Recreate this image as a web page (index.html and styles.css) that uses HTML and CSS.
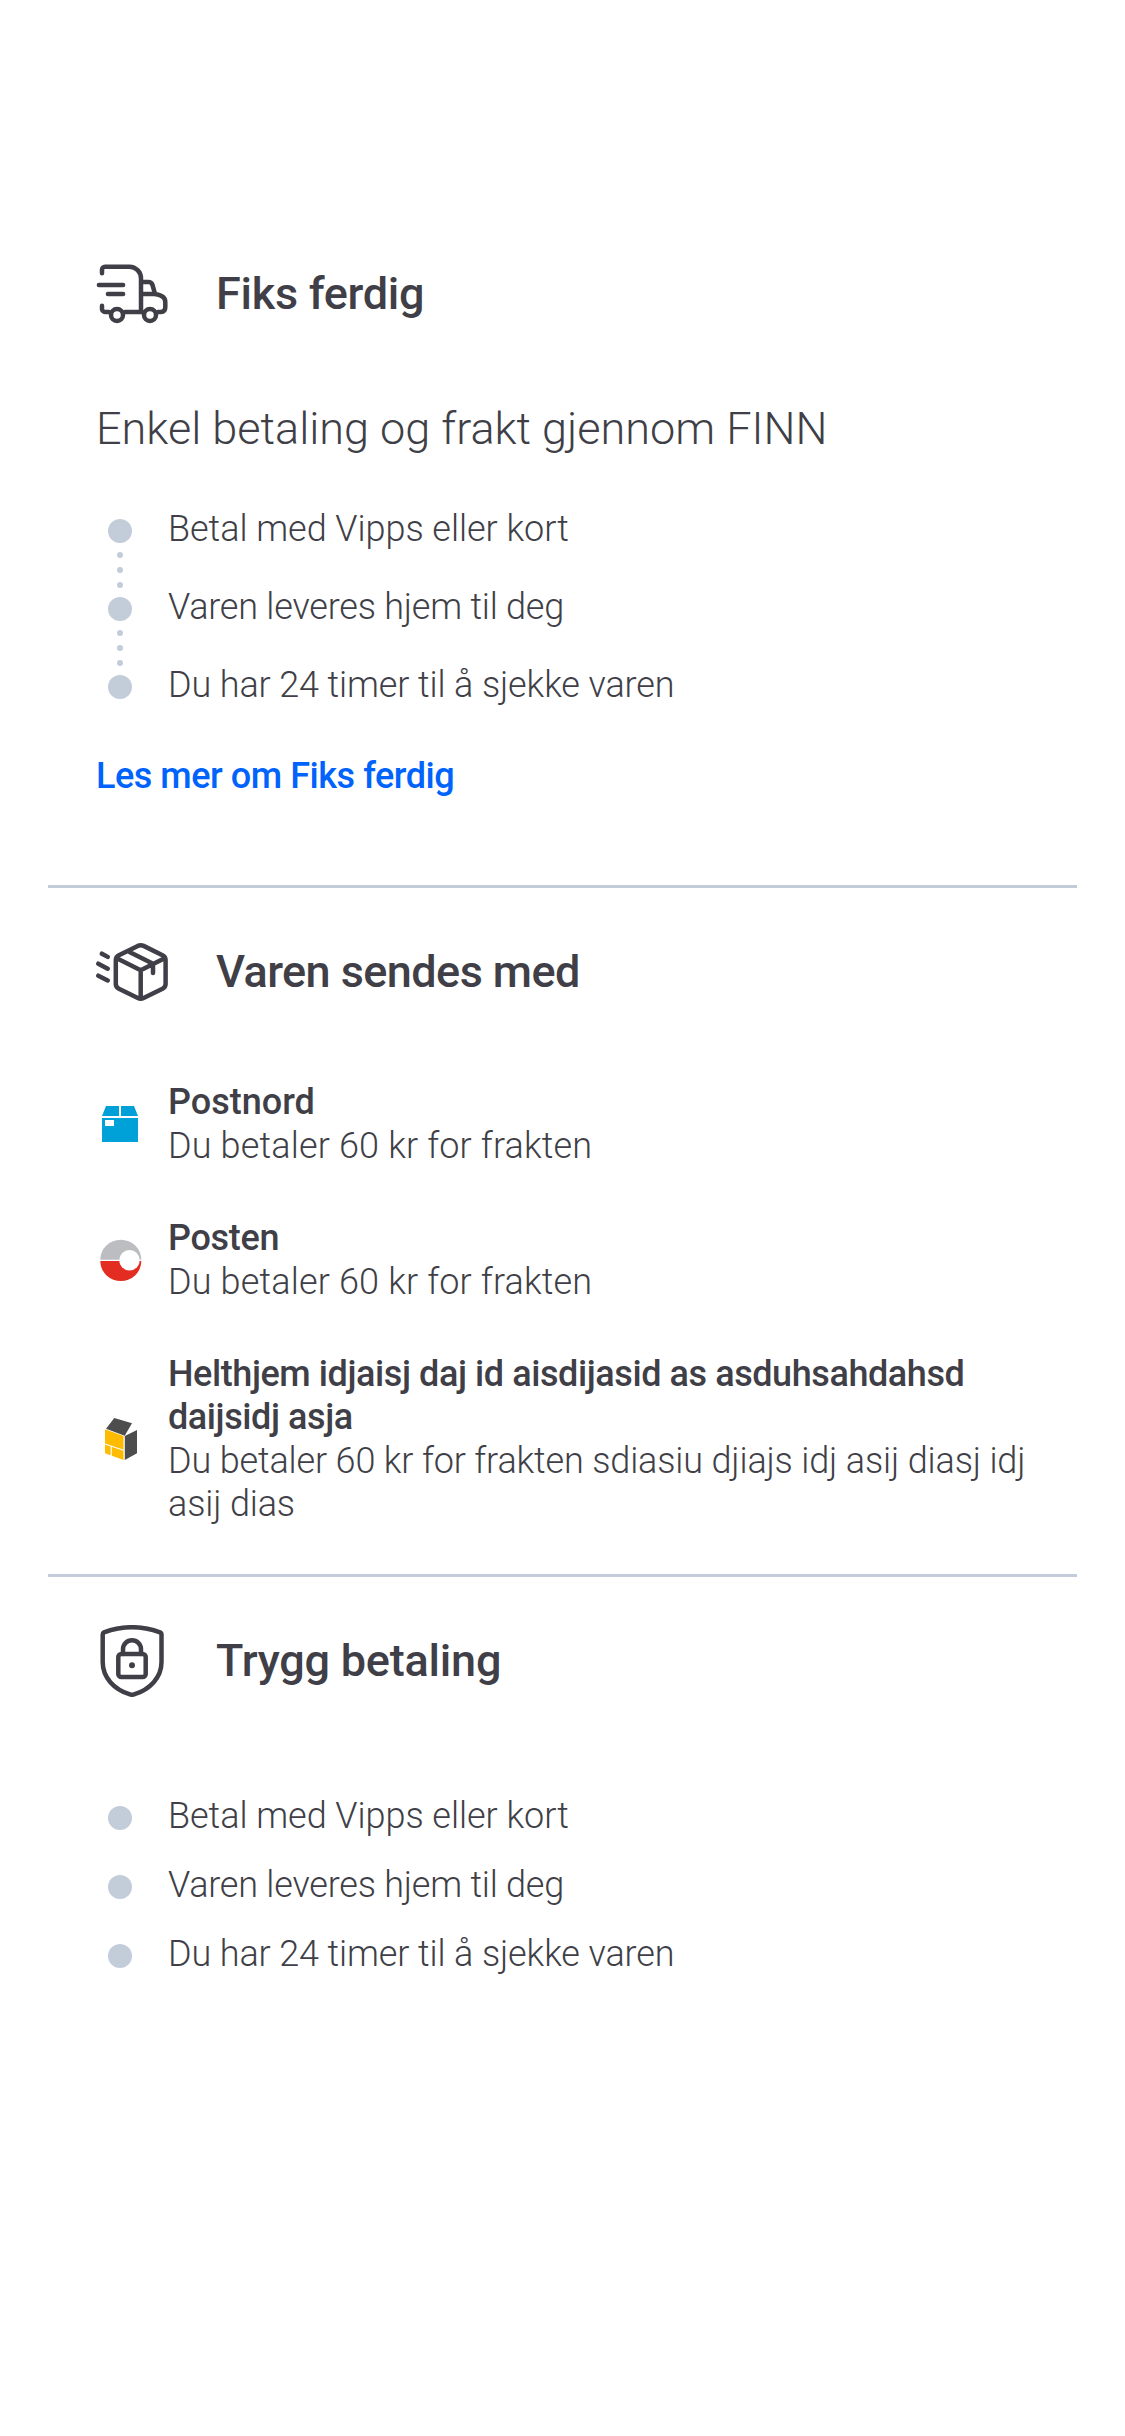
FILE: index.html
```html
<!DOCTYPE html>
<html lang="nb">
<head>
<meta charset="utf-8">
<title>Fiks ferdig</title>
<link rel="stylesheet" href="styles.css">
</head>
<body>
<main class="page">
  <section class="section section-shipping">
    <header class="section-header">
      <svg class="section-icon" viewBox="0 0 72 72">
        <path d="M6 15.3V11.7a3 3 0 0 1 3-3H33.5A11.7 11.7 0 0 1 45 20.4V53.7M6 47.7V50.9a3 3 0 0 0 3 3H13M29 53.9H46.5M2.9 27H27.1M11.9 36H27.1M45 24H52.3c2.2 0 3.6 1 4.2 3L59 35.8M45 36H58.5C65.5 36.8 69.3 39.5 69.3 44V49.3c0 2.9-1.5 4.6-4.3 4.6H62"/>
        <circle cx="21" cy="57" r="6"/>
        <circle cx="54" cy="57" r="6"/>
      </svg>
      <h2 class="section-title title-fiks">Fiks ferdig</h2>
    </header>
    <p class="intro">Enkel betaling og frakt gjennom FINN</p>
    <ol class="steps steps-linked">
      <li class="step"><span class="marker"><i class="dot"></i><i class="tick"></i><i class="tick"></i><i class="tick"></i></span><span class="label label-pay">Betal med Vipps eller kort</span></li>
      <li class="step"><span class="marker"><i class="dot"></i><i class="tick"></i><i class="tick"></i><i class="tick"></i></span><span class="label label-deliver">Varen leveres hjem til deg</span></li>
      <li class="step"><span class="marker"><i class="dot"></i></span><span class="label label-check">Du har 24 timer til å sjekke varen</span></li>
    </ol>
    <a class="more-link">Les mer om Fiks ferdig</a>
  </section>

  <section class="section section-carriers">
    <header class="section-header">
      <svg class="section-icon" viewBox="0 0 72 72">
        <path d="M41.8 9.9Q44.7 8.5 47.6 9.9L66.5 19.2Q69.6 20.8 69.6 24V48Q69.6 51.2 66.5 52.8L47.6 62Q44.7 63.5 41.8 62L22.9 52.8Q19.8 51.2 19.8 48V24Q19.8 20.8 22.9 19.2ZM20.8 22.3L44.7 34.3L68.6 22.3M44.7 34.3V62.7M33 15.8L57 27.7V37M5.9 17.7L11.7 20.9M2.3 27.7L11.7 32.7M2.3 39.7L11.7 44.5"/>
      </svg>
      <h2 class="section-title title-varen">Varen sendes med</h2>
    </header>
    <ul class="carriers">
      <li class="carrier">
        <svg class="carrier-logo" viewBox="0 0 48 47">
          <path fill="#00a0d8" d="M10 6H23V16H6ZM25 6H38L42 16H25ZM6 18H42V42H6Z"/>
          <path fill="#fff" d="M9 20H18V26H9Z"/>
        </svg>
        <div class="carrier-text">
          <h3 class="carrier-name">Postnord</h3>
          <p class="carrier-price">Du betaler 60 kr for frakten</p>
        </div>
      </li>
      <li class="carrier">
        <svg class="carrier-logo" viewBox="0 0 48 47">
          <path fill="#bbbdc0" d="M4.300 23.700A20.500 20 0 0 1 45.300 23.700Z"/>
          <path fill="#e32d22" d="M4.300 25A20.500 20 0 0 0 45.300 25Z"/>
          <circle fill="#fff" cx="33.500" cy="24.300" r="10.300"/>
        </svg>
        <div class="carrier-text">
          <h3 class="carrier-name name-posten">Posten</h3>
          <p class="carrier-price">Du betaler 60 kr for frakten</p>
        </div>
      </li>
      <li class="carrier">
        <svg class="carrier-logo" viewBox="0 0 48 47">
          <path fill="#4d4d4d" d="M18.300 3L36 8.300L28.700 20.700L10 13.700ZM28.800 21L41 15V38.300L28.800 45Z"/>
          <path fill="#ffbb00" d="M9 14.300L27.500 21V45L9 38.300Z"/>
          <path fill="none" stroke="#fff" stroke-width="1.200" d="M9 29L27.500 35.300M15.200 31V41"/>
        </svg>
        <div class="carrier-text">
          <h3 class="carrier-name name-helthjem">Helthjem idjaisj daj id aisdijasid as asduhsahdahsd<br>daijsidj asja</h3>
          <p class="carrier-price price-long">Du betaler 60 kr for frakten sdiasiu djiajs idj asij diasj idj<br>asij dias</p>
        </div>
      </li>
    </ul>
  </section>

  <section class="section section-payment">
    <header class="section-header">
      <svg class="section-icon" viewBox="0 0 72 72">
        <path d="M36 2.200C46 2.200 55 4 64 7.300Q65.500 8 65.500 9.800V37C65.500 52.500 54 64.500 38 69.400Q36 70.200 34 69.400C18 64.500 6.700 52.500 6.700 37V9.800Q6.700 8 8 7.300C17 4 26 2.200 36 2.200ZM27 29V24.300a9 9 0 0 1 18 0V29"/>
        <rect x="22.300" y="29" width="27.400" height="23" rx="3"/>
        <circle class="keyhole" cx="36" cy="40.300" r="3"/>
      </svg>
      <h2 class="section-title title-trygg">Trygg betaling</h2>
    </header>
    <ul class="steps steps-plain">
      <li class="step"><span class="marker"><i class="dot"></i></span><span class="label label-pay">Betal med Vipps eller kort</span></li>
      <li class="step"><span class="marker"><i class="dot"></i></span><span class="label label-deliver">Varen leveres hjem til deg</span></li>
      <li class="step"><span class="marker"><i class="dot"></i></span><span class="label label-check">Du har 24 timer til å sjekke varen</span></li>
    </ul>
  </section>
</main>
</body>
</html>
```

FILE: styles.css
```css
* {
  box-sizing: border-box;
  margin: 0;
  padding: 0;
}

body {
  background: #fff;
  color: #403f47;
  font-family: Roboto, "Liberation Sans", sans-serif;
  font-size: 36px;
  font-weight: 300;
  line-height: 43px;
}

.page {
  width: 1125px;
  min-height: 2436px;
  padding: 258px 48px 0;
}

.section {
  padding: 0 48px;
}

.section-shipping {
  height: 627px;
}

.section-carriers {
  height: 689px;
  padding-top: 48px;
  border-top: 3px solid #c3ccd9;
}

.section-payment {
  padding-top: 48px;
  border-top: 3px solid #c3ccd9;
}

.section-header {
  display: flex;
  align-items: center;
  gap: 48px;
  height: 72px;
}

.section-icon {
  width: 72px;
  height: 72px;
  fill: none;
  stroke: #403f47;
  stroke-width: 4.5;
  stroke-linecap: round;
  stroke-linejoin: round;
}

.keyhole {
  fill: #403f47;
  stroke: none;
}

.section-title {
  font-size: 45px;
  font-weight: 500;
  line-height: 54px;
}

.title-fiks {
  letter-spacing: -0.28px;
}

.title-trygg {
  letter-spacing: -0.22px;
}

.title-varen {
  letter-spacing: -0.57px;
}

.intro {
  margin-top: 72px;
  font-size: 45px;
  line-height: 54px;
}

.steps {
  list-style: none;
}

.steps-linked {
  margin-top: 51px;
}

.steps-plain {
  margin-top: 97px;
}

.step {
  display: flex;
  gap: 24px;
}

.steps-linked .step:not(:last-child) {
  height: 78px;
}

.steps-plain .step {
  height: 69px;
}

.label {
  line-height: 45px;
}

.label-pay {
  letter-spacing: -0.04px;
}

.label-deliver {
  letter-spacing: -0.22px;
}

.label-check {
  letter-spacing: -0.12px;
}

.marker {
  display: flex;
  flex-direction: column;
  align-items: center;
  gap: 9px;
  width: 48px;
  padding-top: 12px;
}

.dot {
  flex: none;
  width: 24px;
  height: 24px;
  border-radius: 50%;
  background: #c3ccd9;
}

.tick {
  flex: none;
  width: 6px;
  height: 6px;
  border-radius: 50%;
  background: #c3ccd9;
}

.more-link {
  display: block;
  margin-top: 47px;
  color: #0063fb;
  font-weight: 500;
  letter-spacing: -0.46px;
}

.carriers {
  display: flex;
  flex-direction: column;
  gap: 49px;
  margin-top: 73px;
  list-style: none;
}

.carrier {
  display: flex;
  align-items: center;
  gap: 24px;
}

.carrier-logo {
  flex: none;
  width: 48px;
  height: 47px;
  margin-bottom: 2px;
}

.carrier-text {
  white-space: nowrap;
}

.carrier-name {
  margin-bottom: 1px;
  font-size: 36px;
  font-weight: 500;
}

.name-posten {
  letter-spacing: -0.3px;
}

.name-helthjem {
  letter-spacing: -0.42px;
}

.carrier-price {
  letter-spacing: 0.16px;
}

.price-long {
  letter-spacing: -0.15px;
}
```
